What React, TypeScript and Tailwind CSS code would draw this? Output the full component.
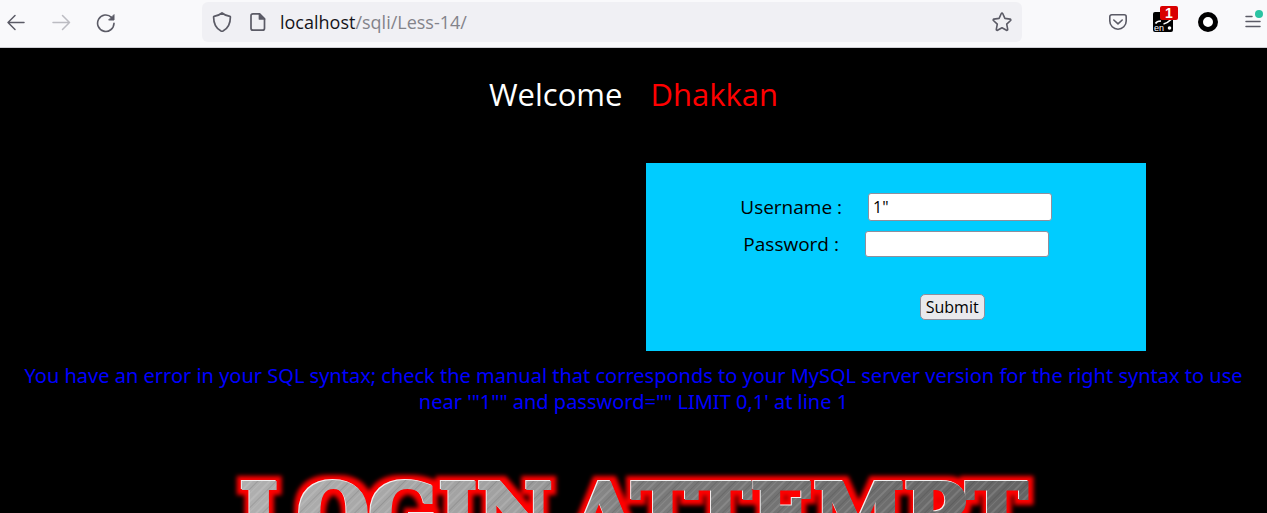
import { useState } from "react";

const iconStroke = {
  fill: "none",
  stroke: "#5b5b66",
  strokeLinecap: "round" as const,
  strokeLinejoin: "round" as const,
};

function BackIcon() {
  return (
    <svg width="20" height="20" viewBox="0 0 20 20" {...iconStroke} strokeWidth="1.5" aria-hidden="true">
      <path d="M18 9.500H2M9 2.500l-7 7 7 7" />
    </svg>
  );
}

function ForwardIcon() {
  return (
    <svg width="20" height="20" viewBox="0 0 20 20" {...iconStroke} stroke="#bcbcc2" strokeWidth="1.5" aria-hidden="true">
      <path d="M2 9.500h16.500M11.500 2.500l7 7-7 7" />
    </svg>
  );
}

function ReloadIcon() {
  return (
    <svg width="20" height="20" viewBox="0 0 20 20" {...iconStroke} strokeWidth="1.600" aria-hidden="true">
      <path d="M15.500 4.300A8.200 8.200 0 1 0 18 10.300" />
      <path d="M18 2v5h-5z" fill="#5b5b66" strokeWidth="1" />
    </svg>
  );
}

function ShieldIcon() {
  return (
    <svg width="20" height="22" viewBox="0 0 20 22" {...iconStroke} strokeWidth="1.700" aria-hidden="true">
      <path d="M10 2c2.300 1.900 5 2.900 8 3.300.3 0 .4.300.4.600 0 6.200-2 11.200-7.400 14.100-.6.300-1.400.3-2 0C3.600 17.100 1.600 12.100 1.600 5.900c0-.3.100-.6.400-.6C5 4.900 7.700 3.900 10 2z" />
    </svg>
  );
}

function PageIcon() {
  return (
    <svg width="16" height="20" viewBox="0 0 16 20" {...iconStroke} strokeWidth="1.700" aria-hidden="true">
      <path d="M3 1.900h6.500l5 5v9.300a2 2 0 0 1-2 2H3a2 2 0 0 1-2-2V3.900a2 2 0 0 1 2-2z" />
      <path d="M9.500 2v5h5z" fill="#5b5b66" />
    </svg>
  );
}

function StarIcon() {
  return (
    <svg width="22" height="22" viewBox="0 0 22 22" {...iconStroke} strokeWidth="1.600" aria-hidden="true">
      <path d="M11.300 2.500c.3-.6 1.100-.6 1.400 0l2.200 4.900 5.200.7c.7.100 1 .9.500 1.400l-3.900 3.700 1 5.200c.1.700-.6 1.200-1.200.9L12 16.700l-4.500 2.600c-.6.300-1.300-.2-1.200-.9l1-5.200-3.900-3.700c-.5-.5-.2-1.300.5-1.400l5.200-.7z" />
    </svg>
  );
}

function PocketIcon() {
  return (
    <svg width="20" height="20" viewBox="0 0 20 20" {...iconStroke} strokeWidth="1.600" aria-hidden="true">
      <path d="M3.700 2.800h12.600a1.900 1.900 0 0 1 1.900 1.900v4.300a8.200 8.200 0 0 1-16.400 0V4.700a1.900 1.900 0 0 1 1.900-1.900z" />
      <path d="M5.800 8 10 11.800l4.200-3.800" />
    </svg>
  );
}

function TranslateIcon() {
  return (
    <svg width="20" height="20" viewBox="0 0 20 20" aria-hidden="true">
      <rect width="20" height="20" rx="2" fill="#000" />
      <path d="M2.500 11.500c1-2 3-2.500 5.500-2.500M10.500 12c3-.5 5-2 7.500-4.500" fill="none" stroke="#fff" strokeWidth="1.700" />
      <circle cx="16.500" cy="16" r="1.800" fill="#fff" />
      <text x="1" y="18.500" fontFamily="Liberation Sans, sans-serif" fontSize="9" fill="#fff">en</text>
    </svg>
  );
}

function RingIcon() {
  return (
    <svg width="20" height="20" viewBox="0 0 20 20" aria-hidden="true">
      <circle cx="10" cy="10" r="7.500" fill="#fff" stroke="#000" strokeWidth="5" />
    </svg>
  );
}

function MenuIcon() {
  return (
    <svg width="18" height="20" viewBox="0 0 18 20" {...iconStroke} strokeWidth="1.500" aria-hidden="true">
      <path d="M3 4.500h6M3 9.500h14M3 14.500h14" />
    </svg>
  );
}

function Toolbar() {
  return (
    <header className="flex h-12 shrink-0 items-center border-b border-[#cfcfd4] bg-[#f9f9fb] pr-1.5 pb-1 pl-1.5">
      <nav className="flex w-49 shrink-0 items-center gap-6.25 pt-0.5" aria-label="History">
        <button type="button" aria-label="Back"><BackIcon /></button>
        <button type="button" aria-label="Forward" disabled><ForwardIcon /></button>
        <button type="button" aria-label="Reload"><ReloadIcon /></button>
      </nav>
      <div className="flex h-10 min-w-0 grow items-center rounded-md bg-[#f0f0f4] px-2.5">
        <button type="button" aria-label="Tracking protection"><ShieldIcon /></button>
        <button type="button" className="ml-4.5" aria-label="Site information"><PageIcon /></button>
        <p className="ml-3.5 grow font-['Open_Sans','Noto_Sans_CJK_SC',sans-serif] text-lg text-[#83838a]">
          <span className="text-[#15141a]">localhost</span>/sqli/Less-14/
        </p>
        <button type="button" aria-label="Bookmark this page"><StarIcon /></button>
      </div>
      <div className="ml-21.5 flex shrink-0 items-center gap-6.25">
        <button type="button" aria-label="Save to Pocket"><PocketIcon /></button>
        <button type="button" className="relative" aria-label="Translate">
          <TranslateIcon />
          <span className="absolute -top-1.5 left-[7px] h-3.5 w-4.5 rounded-xs bg-[#d90000] text-center font-['Liberation_Sans',sans-serif] text-sm leading-3.5 font-bold text-white">1</span>
        </button>
        <button type="button" aria-label="Extension"><RingIcon /></button>
        <button type="button" className="relative" aria-label="Open menu">
          <MenuIcon />
          <span className="absolute -top-0.5 left-3 size-2 rounded-full bg-[#2ac3a2]" />
        </button>
      </div>
    </header>
  );
}

function LoginForm() {
  const [username, setUsername] = useState('1"');
  const [password, setPassword] = useState("");
  const field = "w-46 rounded-[3px] border border-[#8f8f9d] bg-white px-1 text-base text-black";
  return (
    <form
      className="ml-[51%] flex h-47 w-125 flex-col items-center bg-[#00ccff] pt-7.5 text-[19px] text-black"
      onSubmit={(event) => event.preventDefault()}
    >
      <div className="flex items-center gap-6.5">
        <label htmlFor="uname">Username :</label>
        <input id="uname" type="text" className={`h-7 ${field}`} value={username} onChange={(e) => setUsername(e.target.value)} />
      </div>
      <div className="mt-2 flex items-center gap-6.5">
        <label htmlFor="passwd">Password :</label>
        <input id="passwd" type="password" className={`h-6.5 ${field}`} value={password} onChange={(e) => setPassword(e.target.value)} />
      </div>
      <button type="submit" className="mt-9 ml-28 h-6.5 rounded-[5px] border border-[#8f8f9d] bg-[#e9e9ed] px-1.25 text-base leading-6">
        Submit
      </button>
    </form>
  );
}

function LoginAttemptBanner() {
  return (
    <svg
      className="mx-auto mt-12 block"
      width="808"
      height="96"
      viewBox="0 0 808 96"
      role="img"
      aria-label="LOGIN ATTEMPT"
    >
      <defs>
        <linearGradient id="steel" x1="0" y1="0" x2="1" y2="0">
          <stop offset="0" stopColor="#b0b0b0" />
          <stop offset="0.35" stopColor="#a0a0a0" />
          <stop offset="0.5" stopColor="#7c7c7c" />
          <stop offset="1" stopColor="#646464" />
        </linearGradient>
        <pattern id="scratches" width="13" height="13" patternUnits="userSpaceOnUse" patternTransform="rotate(45)">
          <rect x="1" width="2" height="13" fill="#fff" fillOpacity="0.12" />
          <rect x="6" width="1" height="13" fill="#000" fillOpacity="0.1" />
          <rect x="9" width="1" height="13" fill="#fff" fillOpacity="0.1" />
        </pattern>
        <pattern id="brushed" width="808" height="96" patternUnits="userSpaceOnUse">
          <rect width="808" height="96" fill="url(#steel)" />
          <rect width="808" height="96" fill="url(#scratches)" />
        </pattern>
        <filter id="glow" filterUnits="userSpaceOnUse" x="0" y="0" width="808" height="96" colorInterpolationFilters="sRGB">
          <feMorphology in="SourceAlpha" operator="dilate" radius="5" result="spread" />
          <feGaussianBlur in="spread" stdDeviation="2" result="halo" />
          <feFlood floodColor="#ff0000" />
          <feComposite in2="halo" operator="in" result="red" />
          <feOffset in="SourceAlpha" dx="-1" dy="-1" result="shifted" />
          <feFlood floodColor="#f0f0f0" />
          <feComposite in2="shifted" operator="in" result="edge" />
          <feMerge>
            <feMergeNode in="red" />
            <feMergeNode in="edge" />
            <feMergeNode in="SourceGraphic" />
          </feMerge>
        </filter>
      </defs>
      <g
        fill="url(#brushed)"
        stroke="url(#brushed)"
        strokeWidth="4"
        fontFamily="DejaVu Serif, serif"
        fontSize="82"
        fontWeight="700"
        filter="url(#glow)"
      >
        <text x="10" y="80">LOGIN</text>
        <text x="343" y="80">ATTEMPT</text>
      </g>
    </svg>
  );
}

export default function App() {
  return (
    <div className="flex h-screen flex-col overflow-hidden bg-black font-['Open_Sans','Noto_Sans_CJK_SC',sans-serif]">
      <Toolbar />
      <main className="min-h-0 grow overflow-hidden">
        <h1 className="flex justify-center gap-7 pt-6 text-[31px] leading-11 text-white">
          <span>Welcome</span>
          <span className="text-[#ff0000]">Dhakkan</span>
        </h1>
        <div className="pt-[47px]">
          <LoginForm />
        </div>
        <p className="px-2 pt-3 text-center font-['Noto_Sans','Noto_Sans_CJK_SC',sans-serif] text-xl leading-6.5 text-[#0000ff]">
          You have an error in your SQL syntax; check the manual that corresponds to your MySQL server version for the right syntax to use near '"1"" and password="" LIMIT 0,1' at line 1
        </p>
        <LoginAttemptBanner />
      </main>
    </div>
  );
}
